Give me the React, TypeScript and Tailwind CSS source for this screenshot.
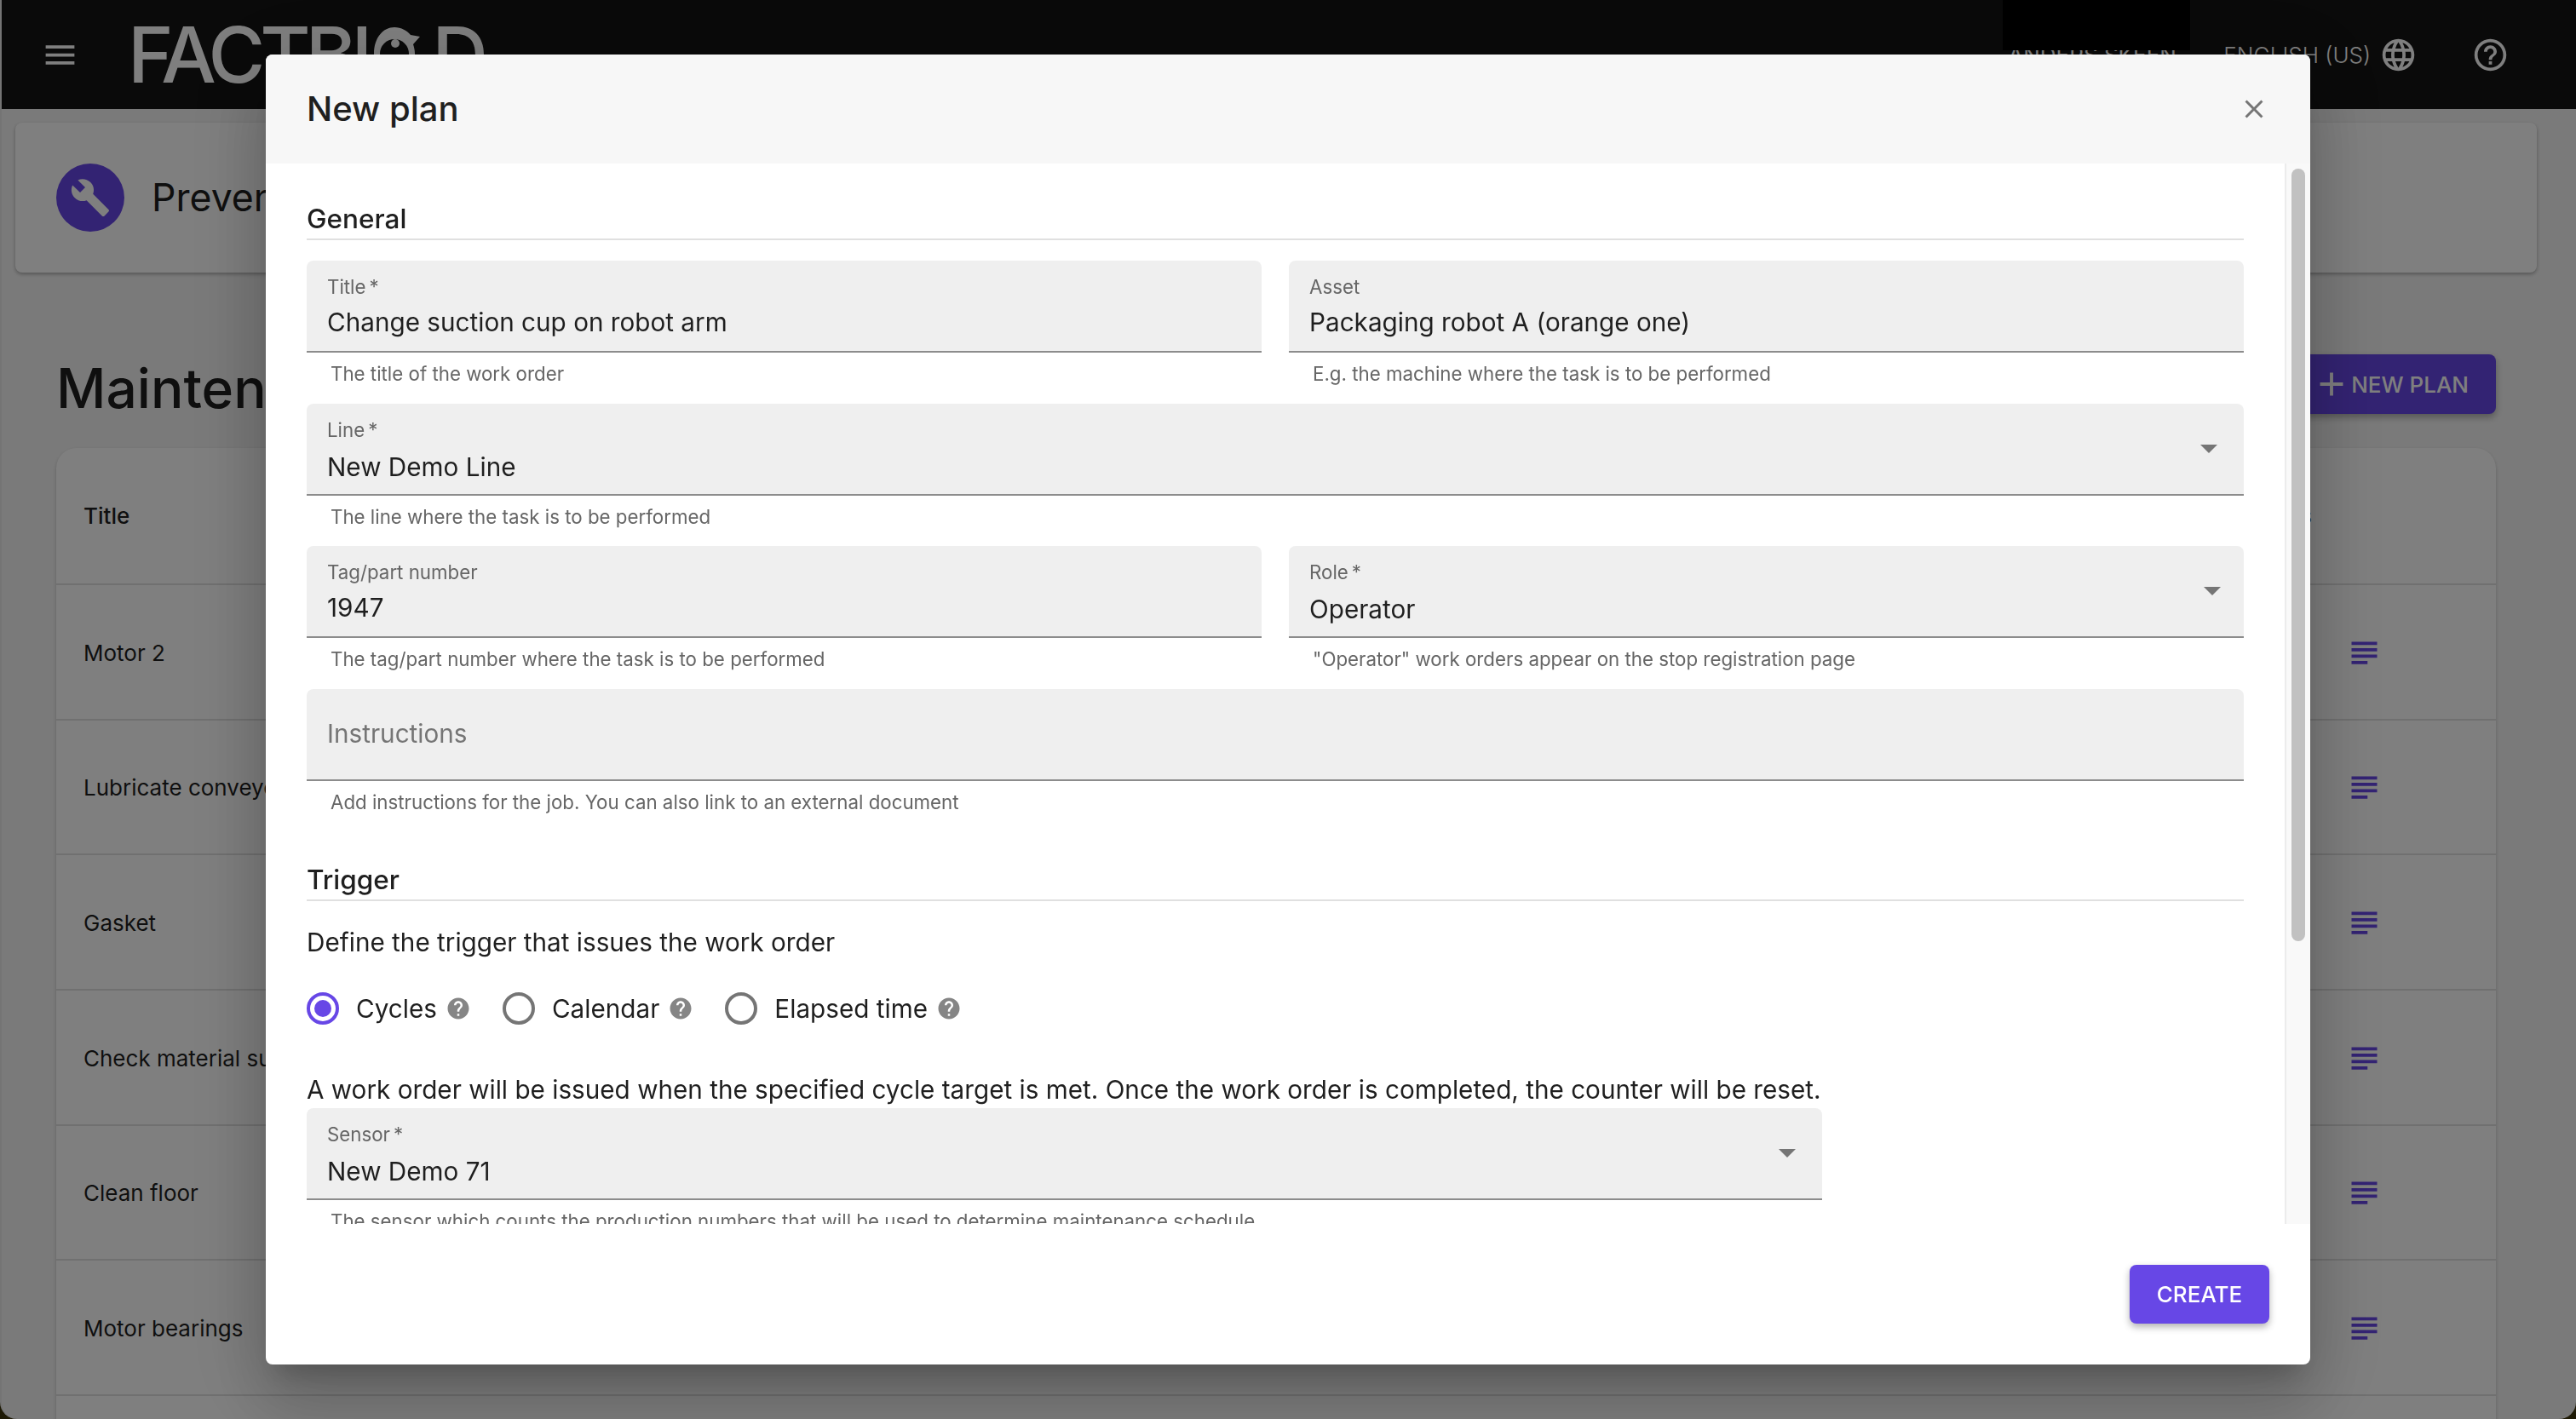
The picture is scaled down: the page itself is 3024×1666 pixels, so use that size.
const ROWS = [
  "Motor 2",
  "Lubricate conveyor belt",
  "Gasket",
  "Check material supply",
  "Clean floor",
  "Motor bearings",
  "Replace filter",
];

const TRIGGERS = [
  { label: "Cycles", checked: true },
  { label: "Calendar", checked: false },
  { label: "Elapsed time", checked: false },
];

function Icon({ d, className }: { d: string; className?: string }) {
  return (
    <svg viewBox="0 0 24 24" fill="currentColor" className={className} aria-hidden>
      <path d={d} />
    </svg>
  );
}

const MENU = "M3 18h18v-2H3v2zm0-5h18v-2H3v2zm0-7v2h18V6H3z";
const GLOBE =
  "M11.99 2C6.47 2 2 6.48 2 12s4.47 10 9.99 10C17.52 22 22 17.52 22 12S17.52 2 11.99 2zm6.93 6h-2.95c-.32-1.25-.78-2.45-1.38-3.56 1.84.63 3.37 1.91 4.33 3.56zM12 4.04c.83 1.2 1.48 2.53 1.91 3.96h-3.82c.43-1.43 1.08-2.76 1.91-3.96zM4.26 14C4.1 13.36 4 12.69 4 12s.1-1.36.26-2h3.38c-.08.66-.14 1.32-.14 2 0 .68.06 1.34.14 2H4.26zm.82 2h2.95c.32 1.25.78 2.45 1.38 3.56-1.84-.63-3.37-1.9-4.33-3.56zm2.95-8H5.08c.96-1.66 2.49-2.93 4.33-3.56C8.81 5.55 8.35 6.75 8.03 8zM12 19.96c-.83-1.2-1.48-2.53-1.91-3.96h3.82c-.43 1.43-1.08 2.76-1.91 3.96zM14.34 14H9.66c-.09-.66-.16-1.32-.16-2 0-.68.07-1.35.16-2h4.68c.09.65.16 1.32.16 2 0 .68-.07 1.34-.16 2zm.25 5.56c.6-1.11 1.06-2.31 1.38-3.56h2.95c-.96 1.65-2.49 2.93-4.33 3.56zM16.36 14c.08-.66.14-1.32.14-2 0-.68-.06-1.34-.14-2h3.38c.16.64.26 1.31.26 2s-.1 1.36-.26 2h-3.38z";
const HELP_OUTLINE =
  "M11 18h2v-2h-2v2zm1-16C6.48 2 2 6.48 2 12s4.48 10 10 10 10-4.48 10-10S17.52 2 12 2zm0 18c-4.41 0-8-3.59-8-8s3.59-8 8-8 8 3.59 8 8-3.59 8-8 8zm0-14c-2.21 0-4 1.79-4 4h2c0-1.1.9-2 2-2s2 .9 2 2c0 2-3 1.75-3 5h2c0-2.25 3-2.5 3-5 0-2.21-1.79-4-4-4z";
const HELP_FILLED =
  "M12 2C6.48 2 2 6.48 2 12s4.48 10 10 10 10-4.48 10-10S17.52 2 12 2zm1 17h-2v-2h2v2zm2.07-7.75-.9.92C13.45 12.9 13 13.5 13 15h-2v-.5c0-1.1.45-2.1 1.17-2.83l1.24-1.26c.37-.36.59-.86.59-1.41 0-1.1-.9-2-2-2s-2 .9-2 2H8c0-2.21 1.79-4 4-4s4 1.79 4 4c0 .88-.36 1.68-.93 2.25z";
const WRENCH =
  "M22.7 19l-9.1-9.1c.9-2.3.4-5-1.5-6.9-2-2-5-2.4-7.4-1.3L9 6 6 9 1.6 4.7C.4 7.1.9 10.1 2.9 12.1c1.9 1.9 4.6 2.4 6.9 1.5l9.1 9.1c.4.4 1 .4 1.4 0l2.3-2.3c.5-.4.5-1.1.1-1.4z";
const SUBJECT = "M14 17H4v2h10v-2zm6-8H4v2h16V9zM4 15h16v-2H4v2zM4 5v2h16V5H4z";
const PLUS = "M19 13h-6v6h-2v-6H5v-2h6V5h2v6h6v2z";
const CLOSE =
  "M19 6.41 17.59 5 12 10.59 6.41 5 5 6.41 10.59 12 5 17.59 6.41 19 12 13.41 17.59 19 19 17.59 13.41 12z";
const ARROW = "M7 10l5 5 5-5z";

function TopBar() {
  return (
    <header className="flex h-[128px] items-center bg-[#141414] text-white">
      <Icon d={MENU} className="ml-[46px] h-[45px] w-[45px]" />
      <div className="ml-[57px] flex items-start text-[91px] font-medium leading-[91px] tracking-[-6px]">
        <span>FACTBI</span>
        <svg viewBox="0 0 60 66" fill="none" className="ml-[4px] mt-[13px] h-[66px] w-[60px]" aria-hidden>
          <path d="M28 0c8 0 15 4 19 9l11 2-8 9c1 3 2 7 2 11 0 19-11 35-24 35S4 50 4 31 15 0 28 0z" fill="#fff" />
          <circle cx="28" cy="31" r="17" fill="#141414" />
          <circle cx="29" cy="19" r="5" fill="#fff" />
        </svg>
        <span className="ml-[12px]">D</span>
      </div>
      <div className="relative ml-auto flex h-full w-[220px] items-center pl-[6px] text-[26px] whitespace-nowrap">
        ANDERS SKEEN
        <div className="absolute left-0 top-0 h-[59px] w-[220px] bg-black" />
      </div>
      <span className="ml-[39px] text-[26px] font-light">ENGLISH (US)</span>
      <Icon d={GLOBE} className="ml-[10px] h-[45px] w-[45px]" />
      <Icon d={HELP_OUTLINE} className="ml-[63px] mr-[78px] h-[45px] w-[45px]" />
    </header>
  );
}

function Page() {
  return (
    <div className="h-[1666px] overflow-hidden rounded-b-[20px] border-l-2 border-[#e8e8e8] bg-[#f5f5f5]">
      <TopBar />
      <main className="w-[2992px] px-[16px] pt-[16px] text-[#1f1f1f]">
        <section className="flex h-[176px] items-start rounded-[8px] bg-white pl-[48px] pt-[48px] shadow-[0_2px_4px_rgba(0,0,0,0.3)]">
          <div className="flex h-[80px] w-[80px] items-center justify-center rounded-full bg-[#6747e6] text-white">
            <Icon d={WRENCH} className="h-[48px] w-[48px]" />
          </div>
          <h1 className="ml-[32px] text-[44.6px] leading-[80px]">Preventive maintenance</h1>
        </section>

        <div className="mx-[48px] mt-[96px] flex h-[70px] items-center justify-between">
          <h2 className="pt-[10px] text-[64px] font-medium leading-[70px]">Maintenance plans</h2>
          <button className="flex h-[70px] items-center rounded-[8px] bg-[#6747e6] pl-[16px] pr-[32px] text-[26px] font-medium text-white shadow-[0_4px_8px_rgba(0,0,0,0.3)]">
            <Icon d={PLUS} className="h-[46px] w-[46px]" />
            NEW PLAN
          </button>
        </div>

        <section className="mx-[48px] mt-[40px] rounded-t-[24px] bg-white text-[26px] shadow-[0_2px_4px_rgba(0,0,0,0.2)]">
          <div className="flex h-[161px] items-center justify-between border-b-2 border-[#e0e0e0] pl-[32px] pr-[216px] font-medium">
            <span>Title</span>
            <span>Instructions</span>
          </div>
          {ROWS.map((row) => (
            <div
              key={row}
              className="flex h-[158.67px] items-center justify-between border-b-2 border-[#e0e0e0] pl-[32px] pr-[132px] pt-[2px]"
            >
              <span>{row}</span>
              <Icon d={SUBJECT} className="h-[45px] w-[45px] text-[#6747e6]" />
            </div>
          ))}
        </section>
      </main>
    </div>
  );
}

function Field({
  label,
  value,
  placeholder,
  helper,
  arrowClass,
}: {
  label?: string;
  value?: string;
  placeholder?: string;
  helper: string;
  arrowClass?: string;
}) {
  return (
    <div className="h-[167.5px] min-w-0 flex-1">
      <div className="flex h-[108px] items-center justify-between rounded-t-[8px] border-b-2 border-[#8c8c8c] bg-[#efefef] px-[24px]">
        {placeholder ? (
          <span className="text-[29.7px] text-[#757575]">{placeholder}</span>
        ) : (
          <div className="self-start pt-[13px]">
            <div className="text-[22.3px] leading-[35px] text-[#666666]">{label}</div>
            <div className={`text-[29.7px] leading-[48px] text-[#1f1f1f] ${arrowClass ? "pt-[2px]" : ""}`}>{value}</div>
          </div>
        )}
        {arrowClass && <Icon d={ARROW} className={`-mt-[2px] h-[48px] w-[48px] text-[#757575] ${arrowClass}`} />}
      </div>
      <p className="ml-[28px] mt-[7px] text-[22.3px] leading-[36px] text-[#666666]">{helper}</p>
    </div>
  );
}

function SectionHeading({ children, className }: { children: string; className?: string }) {
  return (
    <h3 className={`border-b-2 border-[#e0e0e0] text-[31.5px] font-medium leading-[47px] text-[#1f1f1f] ${className ?? ""}`}>
      {children}
    </h3>
  );
}

function Radio({ checked }: { checked: boolean }) {
  return (
    <span
      className={`flex h-[38px] w-[38px] shrink-0 items-center justify-center rounded-full border-[4px] ${
        checked ? "border-[#6747e6]" : "border-[#757575]"
      }`}
    >
      {checked && <span className="h-[20px] w-[20px] rounded-full bg-[#6747e6]" />}
    </span>
  );
}

function Dialog() {
  return (
    <div className="flex h-[1538px] w-[2400px] flex-col overflow-hidden rounded-[8px] bg-white shadow-[0_22px_30px_-14px_rgba(0,0,0,0.2),0_48px_76px_6px_rgba(0,0,0,0.14),0_18px_92px_16px_rgba(0,0,0,0.12)]">
      <div className="flex h-[128px] shrink-0 items-center justify-between bg-[#f7f7f7] pl-[48px] pr-[48px]">
        <h2 className="text-[40px] font-medium text-[#1f1f1f]">New plan</h2>
        <Icon d={CLOSE} className="h-[36px] w-[36px] text-[#757575]" />
      </div>

      <div className="flex h-[1245px] shrink-0">
        <div className="min-w-0 flex-1 overflow-hidden px-[48px] pt-[41px] text-[#1f1f1f]">
          <SectionHeading>General</SectionHeading>
          <div className="mt-[24px] flex gap-[32px]">
            <Field label={"Title\u2009*"} value="Change suction cup on robot arm" helper="The title of the work order" />
            <Field label="Asset" value="Packaging robot A (orange one)" helper="E.g. the machine where the task is to be performed" />
          </div>
          <Field label={"Line\u2009*"} value="New Demo Line" helper="The line where the task is to be performed" arrowClass="-mr-[7px]" />
          <div className="flex gap-[32px]">
            <Field label="Tag/part number" value="1947" helper="The tag/part number where the task is to be performed" />
            <Field label={"Role\u2009*"} value="Operator" helper={'"Operator" work orders appear on the stop registration page'} arrowClass="-mr-[11px]" />
          </div>
          <Field placeholder="Instructions" helper="Add instructions for the job. You can also link to an external document" />

          <SectionHeading className="mt-[33px]">Trigger</SectionHeading>
          <p className="mt-[24px] text-[29.7px] leading-[48px]">Define the trigger that issues the work order</p>
          <div className="mt-[30px] flex h-[48px] items-center">
            {TRIGGERS.map((t) => (
              <div key={t.label} className="mr-[37px] flex items-center">
                <Radio checked={t.checked} />
                <span className="ml-[20px] text-[29.7px] leading-[48px]">{t.label}</span>
                <Icon d={HELP_FILLED} className="ml-[10px] h-[30px] w-[30px] text-[#858585]" />
              </div>
            ))}
          </div>
          <p className="mt-[49px] text-[29.7px] leading-[44px]">
            A work order will be issued when the specified cycle target is met. Once the work order is completed, the counter will be reset.
          </p>
          <div className="w-[1779px]">
            <Field label={"Sensor\u2009*"} value="New Demo 71" helper="The sensor which counts the production numbers that will be used to determine maintenance schedule" arrowClass="-mr-[7px]" />
          </div>
        </div>
        <div className="w-[30px] shrink-0 border-l-2 border-[#ececec] bg-[#f9f9f9] pl-[6px] pt-[6px]">
          <div className="h-[907px] w-[16px] rounded-full bg-[#c1c1c1]" />
        </div>
      </div>

      <div className="flex flex-1 items-start justify-end pr-[48px] pt-[48px]">
        <button className="flex h-[69px] w-[164px] items-center justify-center rounded-[8px] bg-[#6747e6] text-[26px] font-medium text-white shadow-[0_4px_8px_rgba(0,0,0,0.3)]">
          CREATE
        </button>
      </div>
    </div>
  );
}

export default function App() {
  return (
    <div className="relative h-[1666px] w-[3024px] overflow-hidden bg-[#3c340a] font-['Inter',sans-serif]">
      <Page />
      <div className="fixed inset-0 flex items-center justify-center bg-black/50">
        <Dialog />
      </div>
    </div>
  );
}
